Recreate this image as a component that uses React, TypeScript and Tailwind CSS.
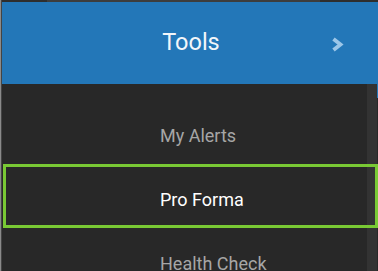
import React from "react";

export default function App() {
  return (
    <div
      className="relative w-[378px] h-[271px] overflow-hidden bg-[#282828] flex"
      style={{ fontFamily: "Roboto, 'Liberation Sans', sans-serif" }}
    >
      <div className="w-[1px] h-full shrink-0 bg-[#8a8a8a]" />
      <div className="w-[1px] h-full shrink-0 bg-[#444]" />
      <div className="relative flex-1 flex flex-col">
        <div className="h-[2px] shrink-0 flex bg-[#2e2e2e]">
          <div className="w-[45px]" />
          <div className="w-[273px] bg-[#3d3d3d]" />
        </div>
        <div className="relative h-[82px] shrink-0 bg-[#2377b8] flex items-center justify-center">
          <span className="text-[23.5px] text-[#f2f6fa] leading-none ml-[2px]">Tools</span>
          <svg
            className="absolute left-[328px] top-[34px]"
            width="15"
            height="17"
            viewBox="0 0 15 17"
          >
            <path
              d="M3.5 3 L10.5 8.5 L3.5 14"
              fill="none"
              stroke="#9cc6e8"
              strokeWidth="3.8"
              strokeLinecap="butt"
              strokeLinejoin="miter"
            />
          </svg>
        </div>
        <div className="absolute right-[1px] top-[84px] bottom-0 w-[10px] bg-[#333333]" />
        <div className="absolute right-0 top-[84px] w-[1px] h-[14px] bg-[#2377b8]" />
        <div className="relative flex flex-col shrink-0 pt-[16px]">
          <div className="h-[64px] shrink-0 flex items-center pt-[7px] pl-[158px] text-[18px] text-[#a6a6a6]">
            My Alerts
          </div>
          <div className="h-[64px] shrink-0 ml-[1px] border-[3px] border-[#79c934] flex items-center pt-[7px] pl-[154px] text-[18px] text-white">
            Pro Forma
          </div>
          <div className="h-[64px] shrink-0 flex items-center pt-[7px] pl-[158px] text-[18px] text-[#a6a6a6]">
            Health Check
          </div>
        </div>
      </div>
    </div>
  );
}
